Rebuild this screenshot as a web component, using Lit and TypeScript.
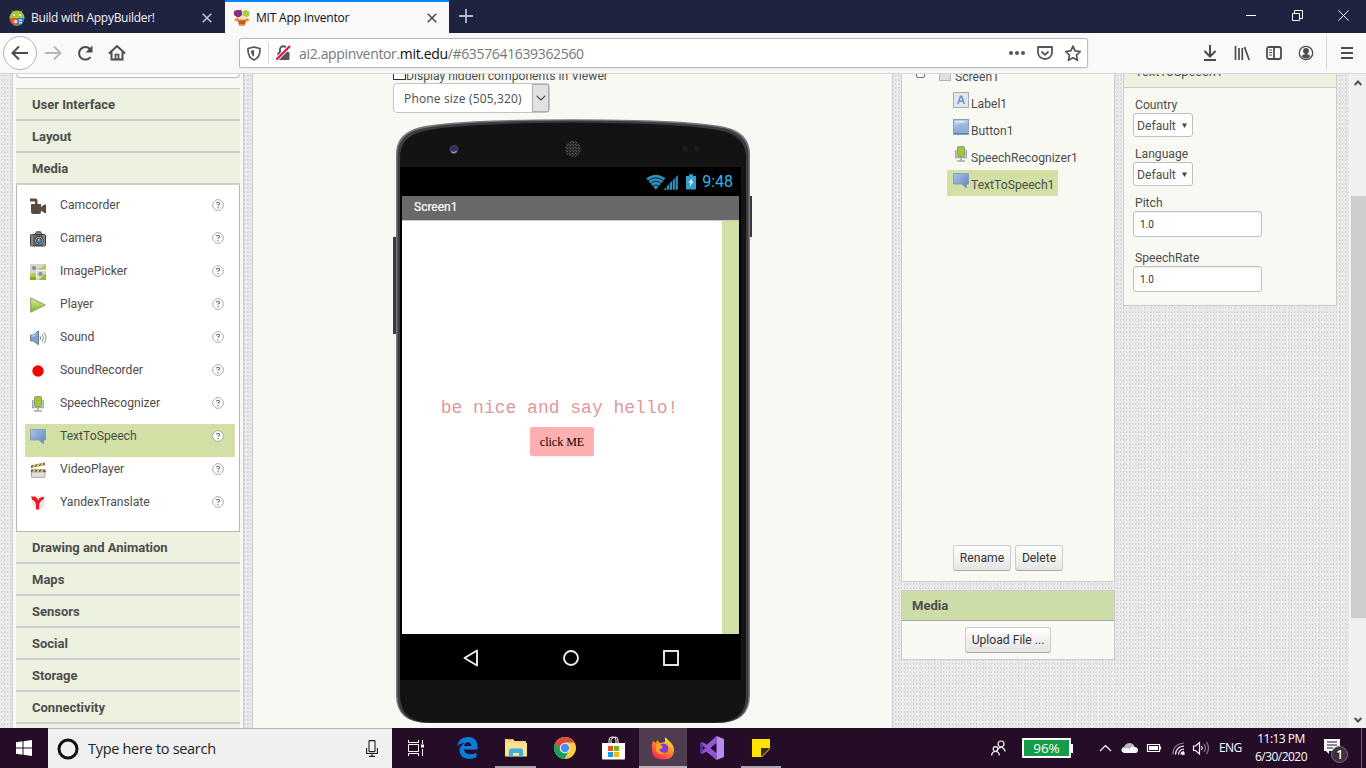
import { LitElement, html, css } from "lit";
import { customElement } from "lit/decorators.js";
import { classMap } from "lit/directives/class-map.js";

const mic = html`<svg width="16" height="16" viewBox="0 0 16 16"><path d="M2.800 4v7.500h10.400V4M8 12v2.500M4 15h8" fill="none" stroke="#a8a8a8" stroke-width="1.600"/><rect x="4.500" y=".6" width="7" height="10" rx="1.200" fill="#a0c63a" stroke="#8a9a70"/></svg>`;
const speech = html`<svg width="16" height="16" viewBox="0 0 16 16"><defs><linearGradient id="sp" x1="0" y1="0" x2="1" y2="1"><stop offset="0" stop-color="#a9c6ea"/><stop offset="1" stop-color="#5c82bb"/></linearGradient></defs><path d="M.5 .5h15v10.500h-2v4l-4.500-4H.5z" fill="url(#sp)" stroke="#7e96b8" stroke-width=".8"/></svg>`;
const sparkle = {
  camcorder: html`<svg width="17" height="16" viewBox="0 0 17 16"><path d="M0 .5h5.500q2 0 2 2V6h3.500v3l3.500-2.500H16v8.500h-1.500L11 12.500V14q0 2-2 2H3q-2 0-2-2V6h4V3.500H0z" fill="#5c4a3f"/></svg>`,
  camera: html`<svg width="16" height="16" viewBox="0 0 16 16"><path d="M5 3.500L6.500.8h4L12 3.500" fill="#888" stroke="#444"/><rect x=".5" y="3.500" width="15" height="11.500" rx="1" fill="#666" stroke="#3d3d3d"/><path d="M2 4v11M14 4v11" stroke="#aaa"/><circle cx="9" cy="9.700" r="4.300" fill="#c8c8c8" stroke="#333"/><circle cx="9" cy="9.700" r="2.600" fill="#4c8fd0" stroke="#234"/><path d="M8 9l1.500-1" stroke="#dff"/></svg>`,
  picker: html`<svg width="16" height="16" viewBox="0 0 16 16"><rect width="16" height="16" fill="#d3d6d4"/><path d="M0 10l6-1v6H0zM8 6l8-6v5z" fill="#a9cf45"/><path d="M9 16l7-7v7z" fill="#8fbb2c"/><path d="M0 13h6v3H0z" fill="#7fab1c"/><path d="M6.500 6.500H16M6.500 6.500V16" stroke="#f4f4f4"/><circle cx="4" cy="4" r="2.100" fill="#8d8d8d"/><circle cx="10.500" cy="10" r="2.100" fill="#8d8d8d"/></svg>`,
  player: html`<svg width="16" height="16" viewBox="0 0 16 16"><defs><linearGradient id="pl" x1="0" y1="0" x2="0" y2="1"><stop offset="0" stop-color="#d7eea0"/><stop offset="1" stop-color="#86b71c"/></linearGradient></defs><path d="M.7 1L15.300 8 .7 15.200z" fill="url(#pl)" stroke="#8a9c68" stroke-width="1"/></svg>`,
  sound: html`<svg width="17" height="16" viewBox="0 0 17 16"><path d="M.6 5h3L8.500.8v14L3.600 11h-3z" fill="#7fa3d3" stroke="#64789a"/><path d="M1.500 6h2.500l3-2.500" fill="none" stroke="#c5daf2"/><path d="M10 6q1.500 2 0 4M12 4q3 4 0 8M14 2.500q4 5.500 0 11" fill="none" stroke="#8c8c8c"/></svg>`,
  rec: html`<svg width="16" height="16" viewBox="0 0 16 16"><circle cx="8" cy="8" r="5.700" fill="#f80000"/></svg>`,
  mic,
  speech,
  video: html`<svg width="16" height="16" viewBox="0 0 16 16"><path d="M1 3.500l14-3v2.500L1 6z" fill="#6d5c3c"/><path d="M3 5.500l2-2.500M7 4.500l2-2.500M11 3.700l2-2.500" stroke="#e5c982" stroke-width="1.800"/><path d="M1.500 8h13.500v7.300H1.500z" fill="#e0e0e0" stroke="#aaa"/><path d="M1 7.500h14.500v2.700H1z" fill="#6d5c3c"/><path d="M3 10.200l2-2.700M7 10.200l2-2.700M11 10.200l2-2.700" stroke="#e5c982" stroke-width="1.800"/></svg>`,
  yandex: html`<svg width="16" height="16" viewBox="0 0 16 16"><circle cx="8.500" cy="8" r="6.500" fill="#e8e8e8"/><path d="M1 1.500h3.500Q7 2 8 5.500 9 2.500 13.500 1.500L14 4Q9.500 6 9.200 10V14.500H6V10Q5 5 2 4.800z" fill="#f4161b"/></svg>`,
};
const help = html`<svg class="help" width="12" height="12" viewBox="0 0 12 12"><path d="M4 .8h4L11.200 4v4L8 11.200H4L.8 8V4z" fill="#fff" stroke="#a4a4a4" stroke-width=".9" stroke-linejoin="round"/><path d="M4.300 4.500Q4.500 3.200 6 3.200q1.600 0 1.600 1.200 0 .8-.9 1.200-.7.400-.7 1.200M6 8v1.300" fill="none" stroke="#6a6a6a" stroke-width="1.100"/></svg>`;

const items: [keyof typeof sparkle, string][] = [
  ["camcorder", "Camcorder"], ["camera", "Camera"], ["picker", "ImagePicker"], ["player", "Player"],
  ["sound", "Sound"], ["rec", "SoundRecorder"], ["mic", "SpeechRecognizer"], ["speech", "TextToSpeech"],
  ["video", "VideoPlayer"], ["yandex", "YandexTranslate"],
];

@customElement("browser-chrome")
class BrowserChrome extends LitElement {
  static styles = css`
    :host { display: block; font: 12px/16px "Open Sans", "Noto Sans", sans-serif; }
    .tabs { height: 33px; background: #202340; display: flex; }
    .tab { box-sizing: border-box; height: 33px; display: flex; align-items: center; padding: 2px 13px 0 9px; color: #f2f2f7; white-space: nowrap; }
    .one { width: 225px; }
    .two { width: 224px; background: #f9f9fa; color: #0c0c0d; border-top: 2px solid #0a84ff; padding-top: 0; padding-right: 12px; }
    .label { margin-left: 6px; flex: 1; letter-spacing: -.29px; }
    .two .label { letter-spacing: -.2px; }
    .plus { margin: 9px 0 0 10px; }
    .wc { margin-left: auto; margin-right: 17px; margin-top: 10px; display: flex; gap: 35px; }
    .bar { height: 41px; background: #f9f9fa; border-bottom: 1px solid #d7d7db; box-sizing: border-box; display: flex; align-items: center; }
    .url { box-sizing: border-box; width: 849px; height: 30px; margin-left: 112px; border: 1px solid #b9b9bb; border-radius: 2px; background: #fff; display: flex; align-items: center; padding: 0 6px 0 7px; box-shadow: 0 1px 3px #0001; }
    .sep { width: 1px; height: 22px; background: #d7d7db; margin: 0 7px; }
    .addr { font-size: 14px; line-height: 20px; letter-spacing: -.34px; color: #77777b; margin-left: 8px; padding-top: 1px; flex: 1; white-space: nowrap; }
    .addr b { font-weight: 400; color: #0c0c0d; }
    .right { margin-left: 114px; display: flex; align-items: center; gap: 16px; }
    .vsep { width: 1px; height: 34px; background: #d7d7db; margin: 0 -2px 0 -4px; }
  `;
  render() {
    return html`
      <div class="tabs">
        <div class="tab one">
          <svg width="16" height="16" viewBox="0 0 16 16"><circle cx="8" cy="8.500" r="7.500" fill="#2d86c8"/><path d="M.5 8a7.500 7.500 0 0 1 15 0z" fill="#a4c639"/><path d="M.5 8h8v8Q2 15.500.5 8z" fill="#e8572a"/><path d="M3 .5l2 2.500M13 .5l-2 2.500" stroke="#a4c639"/><circle cx="5" cy="5" r=".9" fill="#fff"/><circle cx="11" cy="5" r=".9" fill="#fff"/><circle cx="6.500" cy="11.500" r="1.800" fill="#f7d8c8"/><path d="M10 9.500h3v1.500h-3zM10 12h3v1.500h-3z" fill="#cbe4f5"/></svg>
          <span class="label">Build with AppyBuilder!</span>
          <svg width="10" height="10" viewBox="0 0 10 10"><path d="M.7.7l8.600 8.600M9.300.7L.7 9.300" stroke="#c5c5cf" stroke-width="1.500"/></svg>
        </div>
        <div class="tab two">
          <svg width="16" height="16" viewBox="0 0 16 16"><rect width="16" height="16" fill="#fff"/><path d="M0 1l3-1h4l1 1.500v4L6 7 3.500 7.500 0 5z" fill="#8d2c84"/><path d="M8.500 1l4-1 3 1.500v4l-3 2-4-2z" fill="#a5cf4c"/><path d="M5 8l3-3 3 3-1 2H6z" fill="#f7dcc8"/><path d="M0 9.500L3.500 7.500 5 9.500h6L12.500 8l3.500 1.500-2.500 2h-11z" fill="#f58b2d"/><path d="M4 10.500h8l-1 5H5z" fill="#b4622c"/><path d="M5 14h6v1.500H5z" fill="#f58b2d"/></svg>
          <span class="label">MIT App Inventor</span>
          <svg width="10" height="10" viewBox="0 0 10 10"><path d="M.7.7l8.600 8.600M9.300.7L.7 9.300" stroke="#4a4a4f" stroke-width="1.500"/></svg>
        </div>
        <svg class="plus" width="14" height="14" viewBox="0 0 14 14"><path d="M7 0v14M0 7h14" stroke="#b9bac6" stroke-width="1.800"/></svg>
        <div class="wc">
          <svg width="11" height="11" viewBox="0 0 11 11"><path d="M0 5.500h10" stroke="#fff"/></svg>
          <svg width="11" height="11" viewBox="0 0 11 11"><path d="M.5 3.500h7v7h-7zM2.500 3V.5h8v8H8" fill="none" stroke="#fff"/></svg>
          <svg width="11" height="11" viewBox="0 0 11 11"><path d="M.5.5l10 10M10.500.5l-10 10" stroke="#fff"/></svg>
        </div>
      </div>
      <div class="bar">
        <svg width="127" height="40" viewBox="0 0 127 40" fill="none" stroke="#4a4a4f" stroke-width="2">
          <circle cx="20" cy="20" r="16.500" fill="#fff" stroke="#b5b5b8" stroke-width="1"/>
          <path d="M28 20H13M19 13.500L12.500 20l6.500 6.500"/>
          <path d="M45 20h15M54 13.500l6.500 6.500-6.500 6.500" stroke="#b8b8ba"/>
          <path d="M90.500 24a6.300 6.300 0 1 1-.5-8"/><path d="M92.500 12.500v7h-7z" fill="#4a4a4f" stroke="none"/>
          <path d="M109 20.500l8-7.500 8 7.500M111.500 19v7.500h11V19"/><path d="M115.500 27v-5.500h3V27" stroke-width="1.700"/>
        </svg>
        <div class="url">
          <svg width="14" height="15" viewBox="0 0 14 15"><path d="M7 1L13 2.500Q13.500 11 7 14 .5 11 1 2.500z" fill="none" stroke="#55555a" stroke-width="1.700" stroke-linejoin="round"/><path d="M7 4v6.800Q4 9 4 4.700z" fill="#55555a"/></svg>
          <div class="sep"></div>
          <svg width="15" height="16" viewBox="0 0 15 16"><path d="M4 7V4.500a3.300 3.300 0 0 1 6.600 0V7" fill="none" stroke="#55555a" stroke-width="1.900"/><rect x="1.500" y="7" width="12" height="8" rx="1" fill="#55555a"/><path d="M.5 14.500L14 1" stroke="#f9f9fa" stroke-width="4"/><path d="M.5 14.500L14 1" stroke="#ff0039" stroke-width="2"/></svg>
          <span class="addr">ai2.appinventor.<b>mit.edu</b>/#6357641639362560</span>
          <svg width="76" height="18" viewBox="0 0 76 18" fill="none" stroke="#55555a" stroke-width="1.800"><g fill="#55555a" stroke="none"><circle cx="6" cy="9" r="2"/><circle cx="12" cy="9" r="2"/><circle cx="18" cy="9" r="2"/></g><path d="M33 3h14v5.500a7 6.500 0 0 1-14 0zM36.500 7.500l3.500 3.300 3.500-3.300" stroke-linejoin="round"/><path d="M68 2l2.100 4.800 5.200.7-3.800 3.600 1 5.200-4.500-2.500-4.600 2.500 1-5.200-3.800-3.600 5.200-.7z" stroke-linejoin="round" stroke-width="1.700"/></svg>
        </div>
        <div class="right">
          <svg width="16" height="16" viewBox="0 0 16 16" fill="none" stroke="#4a4a4f" stroke-width="2"><path d="M8 0v11M2.500 6L8 11.500 13.500 6M2 15h12"/></svg>
          <svg width="16" height="16" viewBox="0 0 16 16" fill="none" stroke="#4a4a4f" stroke-width="1.700"><path d="M1.500 1v14M5 3v12M8.300 3v12M10.500 2l4.700 13"/></svg>
          <svg width="16" height="16" viewBox="0 0 16 16" fill="none" stroke="#4a4a4f" stroke-width="1.800"><rect x="1" y="2" width="14" height="12" rx="2"/><path d="M8 2v12"/><path d="M3 5h3M3 7.500h3M3 10h3" stroke-width="1"/></svg>
          <svg width="16" height="16" viewBox="0 0 16 16"><circle cx="8" cy="8" r="6.700" fill="none" stroke="#4a4a4f" stroke-width="1.300"/><circle cx="8" cy="6" r="2.900" fill="#4a4a4f"/><path d="M3.500 11q4.500-4 9 0-4.500 5-9 0z" fill="#4a4a4f"/></svg>
          <div class="vsep"></div>
          <svg width="12" height="14" viewBox="0 0 12 14"><path d="M0 2h12M0 7h12M0 12h12" stroke="#4a4a4f" stroke-width="2"/></svg>
        </div>
      </div>`;
  }
}

@customElement("palette-panel")
class PalettePanel extends LitElement {
  static styles = css`
    :host { box-sizing: border-box; display: block; width: 232px; height: 654px; overflow: hidden; border: 1px solid #ccc; border-width: 0 1px; background: #f8f9f3; padding: 0 3px 0 3px; font: 12px/16px Roboto, sans-serif; color: #4d4d4d; }
    .find { box-sizing: border-box; height: 4px; border: 1px solid #bbb; border-top: 0; border-radius: 0 0 4px 4px; background: #fff; }
    .cats { margin-top: 10px; border-top: 1px solid #ccc; width: 224px; }
    .cat { box-sizing: border-box; height: 32px; background: #edf1e0; border-bottom: 2px solid #cecece; padding: 8px 16px 0; font-weight: 700; font-size: 13px; }
    .list { box-sizing: border-box; height: 347px; border: 1px solid #b6b6b6; border-top: 0; background: #fff; padding: 8px 4px 8px 8px; }
    .item { height: 33px; display: flex; align-items: flex-start; padding-left: 5px; padding-right: 11px; box-sizing: border-box; }
    .sel { background: #d2e0a6; }
    .ico { width: 30px; padding-top: 5px; }
    .ico svg, .help { display: block; }
    .name { flex: 1; padding-top: 4px; font-size: 12.150px; }
    .help { margin-top: 6px; }
  `;
  render() {
    const cat = (t: string) => html`<div class="cat">${t}</div>`;
    return html`<div class="find"></div>
      <div class="cats">
        ${["User Interface", "Layout", "Media"].map(cat)}
        <div class="list">${items.map(([k, n]) => html`<div class=${classMap({ item: true, sel: k === "speech" })}><span class="ico">${sparkle[k]}</span><span class="name">${n}</span>${help}</div>`)}</div>
        ${["Drawing and Animation", "Maps", "Sensors", "Social", "Storage", "Connectivity", ""].map(cat)}
      </div>`;
  }
}

@customElement("phone-viewer")
class PhoneViewer extends LitElement {
  static styles = css`
    :host { box-sizing: border-box; display: block; width: 641px; height: 654px; overflow: hidden; border: 1px solid #ccc; border-width: 0 1px; background: #f8f9f3; padding-left: 140px; font: 12.150px/16px Roboto, sans-serif; color: #4d4d4d; }
    .hidden { display: flex; height: 9px; align-items: flex-end; white-space: nowrap; }
    .hidden i { box-sizing: border-box; width: 13px; height: 13px; border: 1px solid #333; background: #fff; margin-bottom: 3px; }
    .hidden span { margin-bottom: -1px; }
    .select { box-sizing: border-box; width: 157px; height: 30px; border: 1px solid #c4c4c4; border-radius: 4px; background: #fff; display: flex; justify-content: space-between; padding-left: 10px; font: 12px/29px "Open Sans", sans-serif; letter-spacing: .16px; }
    .arrow { width: 17px; background: #e1e1e1; border: 1px solid #adadad; box-sizing: border-box; display: grid; place-items: center; }
    .phone { display: grid; width: 360px; height: 610px; margin-top: 5px; }
    .phone > * { grid-area: 1 / 1; }
    .frame { display: block; }
    .screen { width: 341px; height: 513px; margin: 49px 0 0 7px; background: #000; }
    .status { height: 29px; display: flex; justify-content: flex-end; align-items: center; padding-right: 8px; box-sizing: border-box; color: #33b5e5; font: 16px/29px Roboto, sans-serif; gap: 6px; }
    .title { box-sizing: border-box; width: 337px; margin-left: 2px; height: 25px; background: #696969; border-bottom: 1px solid #c8c8c8; color: #fff; padding: 3px 12px; font-size: 12px; -webkit-text-stroke: .2px #fff; }
    .body { width: 337px; margin-left: 2px; height: 413px; display: flex; background: #d2e0a6; }
    .form { width: 320px; background: #fff; display: flex; flex-direction: column; align-items: center; }
    .label { margin: 176px 0 0 -5px; font: 18px/22px "Liberation Mono", monospace; color: #e0999a; white-space: pre; }
    .btn { margin: 8px 0 0 0; width: 64px; height: 29px; background: #ffafaf; border-radius: 2px; font: 12px/30px "Liberation Serif", serif; color: #000; text-align: center; box-shadow: 0 1px 2px #0001; }
    .nav { height: 46px; display: block; }
  `;
  render() {
    return html`
      <div class="hidden"><i></i><span>Display hidden components in Viewer</span></div>
      <div class="select"><span>Phone size (505,320)</span><span class="arrow"><svg width="10" height="6" viewBox="0 0 10 6"><path d="M.8.8L5 5 9.200.8" fill="none" stroke="#444" stroke-width="1.200"/></svg></span></div>
      <div class="phone">
        <svg class="frame" width="360" height="610" viewBox="0 0 360 610">
          <defs><pattern id="g" width="3" height="3" patternUnits="userSpaceOnUse"><path d="M0 0h1v1H0zM2 2h1v1H2z" fill="#5a5a5a"/></pattern></defs>
          <path d="M0 119h4v97H0zM356 78h3v41h-3z" fill="#3a3a3c"/>
          <path d="M3 36Q3 18 21 11Q45 1.500 180 1.200Q315 1.500 339 11Q357 18 357 36V577Q357 605 325 605H35Q3 605 3 577z" fill="#77777a"/>
          <path d="M4.500 37Q4.500 19.500 22 12.500Q46 3 180 2.500Q314 3 338 12.500Q355.500 19.500 355.500 37V577Q355.500 605 324 605H36Q4.500 605 4.500 577z" fill="#3c3c40"/>
          <path d="M7 40Q7 22 24 15Q48 5.500 180 4.500Q312 5.500 336 15Q353 22 353 40V577Q353 604.500 322 604.500H38Q7 604.500 7 577z" fill="#131313"/>
          <circle cx="61" cy="31.500" r="4.500" fill="#3f3f46"/><circle cx="61" cy="31" r="2.500" fill="#2a2a78"/><path d="M58.500 33.500q2.500 2.500 5-.5" fill="none" stroke="#999" stroke-width="1.300"/>
          <circle cx="180" cy="31" r="8" fill="#262626"/><circle cx="180" cy="31" r="8" fill="url(#g)"/>
          <circle cx="292" cy="30.500" r="3" fill="#1d1d1f"/><circle cx="304" cy="30.500" r="2.200" fill="#1d1d1f"/>
        </svg>
        <div class="screen">
          <div class="status">
            <svg width="50" height="16" viewBox="0 0 50 16"><path d="M.3 4.500Q9.800-3 19.300 4.500L9.800 15.800z" fill="#2b93bd"/><path d="M2 6.800q7.800-6 15.600 0M4.300 9.500q5.500-4.500 11 0M6.600 12.200q3.200-2.500 6.400 0" fill="none" stroke="#000" stroke-width=".8"/><path d="M17.500 15.700L31.800 1V15.700z" fill="#2b93bd"/><path d="M20.500 10v6M23.500 7v9M26.500 5v11M29.300 2v14" stroke="#000" stroke-width=".7"/><path d="M40 2h3V.3h4V2h3v13.500H40z" fill="#2fa0cb"/><path d="M46.500 4l-4 4.500h2.300l-1.300 4.500 4-5.500h-2.300z" fill="#fff"/></svg>
            <span>9:48</span>
          </div>
          <div class="title">Screen1</div>
          <div class="body"><div class="form"><div class="label">be nice and say hello!</div><div class="btn">click ME</div></div></div>
          <svg class="nav" width="341" height="46" viewBox="0 0 341 46" fill="none" stroke="#eee" stroke-width="1.900"><path d="M77 16.500v15L64.500 24z" stroke-linejoin="round"/><circle cx="171" cy="24" r="7"/><rect x="264" y="17" width="14" height="14"/></svg>
        </div>
      </div>`;
  }
}

@customElement("side-panels")
class SidePanels extends LitElement {
  static styles = css`
    :host { display: flex; align-items: flex-start; gap: 8px; height: 654px; overflow: hidden; font: 12.150px/16px Roboto, sans-serif; color: #4d4d4d; }
    .panel { box-sizing: border-box; width: 214px; border: 1px solid #ccc; background: #f8f9f3; }
    .tree { height: 508px; border-top: 0; display: flex; flex-direction: column; }
    .root { height: 20px; margin-top: -5px; display: flex; padding-left: 14px; flex: none; }
    .root .box { box-sizing: border-box; width: 9px; height: 9px; border: 1.500px solid #5870b0; background: #fff; border-radius: 2px; margin-right: 14px; }
    .root .chip { box-sizing: border-box; width: 12px; height: 12px; border: 1px solid #b5b5b5; background: #dedede; margin-right: 4px; }
    .root span { margin-top: 0; }
    .node { display: flex; height: 26px; margin: 0 0 1px 45px; align-self: flex-start; padding: 0 4px 0 6px; box-sizing: border-box; }
    .node svg { margin: 3px 2px 0 0; }
    .node span { padding-top: 7px; }
    .on { background: #d2e0a6; }
    .actions { margin-top: auto; margin-bottom: 10px; display: flex; justify-content: center; gap: 4px; }
    .button { box-sizing: border-box; height: 26px; border: 1px solid #ccc; border-bottom-color: #aaa; border-radius: 3px; background: linear-gradient(#fff, #e4e4e4); color: #333; line-height: 24px; text-align: center; }
    .rename { width: 58px; } .delete { width: 48px; } .upload { width: 86px; margin: 6px auto 0; }
    .media { margin-top: 8px; height: 70px; }
    .head { box-sizing: border-box; height: 30px; background: #ccdda8; border-bottom: 1px solid #aaa; padding: 7px 10px; font-weight: 700; font-size: 13px; }
    .props { height: 232px; border-top: 0; }
    .phead { box-sizing: border-box; height: 14px; overflow: hidden; background: #edf1e0; border-bottom: 1px solid #ccc; }
    .phead div { margin: -10px 0 0 11px; font-size: 12.800px; }
    .form { padding: 9px 9px 0; }
    .lab { padding-left: 2px; height: 16px; }
    .sel, .inp { box-sizing: border-box; border: 1px solid #c0c0c0; border-radius: 3px; background: #fff; }
    .sel { width: 60px; height: 24px; margin: 0 0 9px; display: flex; align-items: center; justify-content: space-between; padding: 1px 5px 0 3px; }
    .sel svg { flex: none; }
    .inp { width: 129px; height: 26px; margin: 0 0 13px; padding-left: 6px; font-size: 10px; line-height: 26px; box-shadow: inset 0 1px 1px #0001; color: #333; }
  `;
  render() {
    const a = html`<svg width="16" height="16" viewBox="0 0 16 16"><rect x=".5" y=".5" width="15" height="15" fill="#e2e6ec" stroke="#aaa"/><path d="M4.800 12L7.500 4.200h1.200L11.300 12M5.800 9.300h4.500" fill="none" stroke="#6f96cf" stroke-width="1.600"/></svg>`;
    const b = html`<svg width="16" height="16" viewBox="0 0 16 16"><defs><linearGradient id="bt" x1="0" y1="0" x2="0" y2="1"><stop offset="0" stop-color="#a6c0e4"/><stop offset="1" stop-color="#86aad9"/></linearGradient></defs><rect x=".5" y=".5" width="15" height="15" fill="url(#bt)" stroke="#8c9fba"/><path d="M1 10Q3 4 14.500 4V1H1z" fill="#fff" opacity=".2"/><path d="M2 2h9v1.500H2z" fill="#fff" opacity=".6"/><path d="M1 14.500h14" stroke="#5c80b5"/></svg>`;
    const tri = html`<svg width="5" height="5" viewBox="0 0 5 5"><path d="M0 .5h5L2.500 5z" fill="#444"/></svg>`;
    return html`
      <div>
        <div class="panel tree">
          <div class="root"><div class="box"></div><div class="chip"></div><span>Screen1</span></div>
          ${([[a, "Label1"], [b, "Button1"], [mic, "SpeechRecognizer1"], [speech, "TextToSpeech1"]] as const).map(([i, t], n) => html`<div class=${classMap({ node: true, on: n === 3 })}>${i}<span>${t}</span></div>`)}
          <div class="actions"><div class="button rename">Rename</div><div class="button delete">Delete</div></div>
        </div>
        <div class="panel media"><div class="head">Media</div><div class="button upload">Upload File ...</div></div>
      </div>
      <div class="panel props">
        <div class="phead"><div>TextToSpeech1</div></div>
        <div class="form">
          <div class="lab">Country</div><div class="sel">Default${tri}</div>
          <div class="lab">Language</div><div class="sel">Default${tri}</div>
          <div class="lab">Pitch</div><div class="inp">1.0</div>
          <div class="lab">SpeechRate</div><div class="inp">1.0</div>
        </div>
      </div>`;
  }
}

@customElement("task-bar")
class TaskBar extends LitElement {
  static styles = css`
    :host { display: flex; height: 40px; background: #250c27; color: #fff; font: 12px/18px "Open Sans", "Noto Sans", sans-serif; }
    .start { width: 48px; display: grid; place-items: center; }
    .search { box-sizing: border-box; width: 344px; background: #f0f0f0; border-top: 1px solid #b9b5ba; display: flex; align-items: center; padding: 0 14px 0 9px; color: #222; }
    .search span { flex: 1; margin-left: 9px; font-size: 14.500px; letter-spacing: -.3px; }
    .apps { display: flex; }
    .app { box-sizing: border-box; width: 49px; height: 40px; display: grid; place-items: center; border-bottom: 2px solid transparent; padding-top: 2px; }
    .task { width: 48px; } .edge { width: 55px; padding-right: 1px; } .files { width: 41px; border-color: #aaa6ac; margin-right: 4px; }
    .fox { width: 48px; background: #503c51; border-color: #bbb5bb; margin-left: 1px; }
    .vs { width: 50px; } .note { width: 40px; margin-left: 4px; border-color: #aaa6ac; }
    .tray { margin-left: auto; display: flex; align-items: center; }
    .charge { box-sizing: border-box; width: 49px; height: 20px; border: 2px solid #fff; background: #169b4b; text-align: center; font-size: 13.500px; line-height: 17px; letter-spacing: -.1px; margin-left: 16px; }
    .nub { width: 2px; height: 9px; background: #fff; }
    .icons { margin-left: 25px; }
    .eng { margin-left: 9px; letter-spacing: -.6px; width: 24px; }
    .clock { width: 66px; margin-left: 5px; text-align: center; letter-spacing: -.53px; white-space: nowrap; }
    .notif { margin-left: 9px; margin-top: 3px; }
    .edgeLine { width: 1px; height: 40px; background: #6f5f70; margin: 0 4px 0 12px; }
  `;
  render() {
    return html`
      <div class="start"><svg width="16" height="16" viewBox="0 0 16 16"><path d="M0 2.200L6.500 1.300V7.500H0zM7.500 1.200L16 0v7.500H7.500zM0 8.500h6.500v6.200L0 13.800zM7.500 8.500H16V16l-8.500-1.200z" fill="#fff"/></svg></div>
      <div class="search">
        <svg width="22" height="22" viewBox="0 0 22 22"><circle cx="11" cy="11" r="9" fill="none" stroke="#111" stroke-width="3"/></svg>
        <span>Type here to search</span>
        <svg width="12" height="17" viewBox="0 0 12 17" fill="none" stroke="#222" stroke-width="1.100"><rect x="3" y=".6" width="6" height="11" rx=".5"/><path d="M.6 8v5.500h10.800V8M6 14v2.500M3 16.400h6"/></svg>
      </div>
      <div class="apps">
        <div class="app task"><svg width="16" height="16" viewBox="0 0 16 16" fill="none" stroke="#fff"><path d="M.5 0v2.500h10V0M.5 16v-2.500h10V16M.5 4.500h10v7H.500zM14.500 0v4M14.500 9v7"/><path d="M13 4.500h3v3h-3z" fill="#fff" stroke="none"/></svg></div>
        <div class="app edge"><svg width="21" height="22" viewBox="0 0 21 22"><path d="M0 9Q2 0 11 0q9 0 9.500 9v3.500H7q.5 4.500 6 4.700 4 0 6.500-1.500V20Q17 22 12 22 3 21.500 2.500 13.500 2.500 9 8 6 3 6 0 9zM7 9h7.500Q14 5.500 11 5.200 8 5.500 7 9z" fill="#0a7bda"/></svg></div>
        <div class="app files"><svg width="22" height="18" viewBox="0 0 22 18"><path d="M0 0h8l1.500 2H21v15H0z" fill="#f7d678"/><path d="M0 4h22v13.500H0z" fill="#fde290"/><path d="M3 .7h4" stroke="#e89d26"/><path d="M4 18v-7l1.500-1.500h11L18 11v7h-4v-4H8v4z" fill="#38b0e4"/></svg></div>
        <div class="app"><svg width="22" height="22" viewBox="0 0 22 22"><circle cx="11" cy="11" r="11" fill="#ffcd43"/><path d="M1.500 5.500A11 11 0 0 1 20.500 5.500H11L6 14z" fill="#dc4c3e"/><path d="M1.500 5.500l5 8.500 8 .5L10.500 22A11 11 0 0 1 1.500 5.500z" fill="#17a05d"/><circle cx="11" cy="11" r="5.200" fill="#f1f1f1"/><circle cx="11" cy="11" r="4.200" fill="#4c8bf5"/></svg></div>
        <div class="app"><svg width="23" height="24" viewBox="0 0 23 24"><path d="M7 7V4q0-3 3-3h1q3 0 3 3v3M9 7V4q0-2 4-3 3 0 3 3v3" fill="none" stroke="#fff"/><path d="M0 7h23v15.500q0 1-1 1H1q-1 0-1-1z" fill="#fff"/><path d="M6 10h5v5H6z" fill="#f25022"/><path d="M12 10h5v5h-5z" fill="#7fba00"/><path d="M6 16h5v5H6z" fill="#00a4ef"/><path d="M12 16h5v5h-5z" fill="#ffb900"/></svg></div>
        <div class="app fox"><svg width="24" height="24" viewBox="0 0 24 24"><defs><linearGradient id="ff" x1=".8" y1="0" x2=".2" y2="1"><stop offset="0" stop-color="#fff14a"/><stop offset=".4" stop-color="#ff9a1f"/><stop offset="1" stop-color="#f5195c"/></linearGradient></defs><path d="M2 5l3 2 1-3 3 3 5-1 0-5 4 4q5 4 5 9 0 9.500-11 9.500T1 14Q0 9 2 5z" fill="url(#ff)"/><circle cx="12.500" cy="12.500" r="4.800" fill="#7a3ddb"/><path d="M5 8q4-1 7 3-2 2.500-4 2.500 2 4 7 3-7 4-10-2z" fill="#ffa02a"/></svg></div>
        <div class="app vs"><svg width="24" height="24" viewBox="0 0 24 24"><path d="M16.500 0v7L5 16.500 2 18l-2-1V7l2-1 3 1.500L16.500 17v7L2.500 12.500z" fill="#8d55d3"/><path d="M2.500 9.500v5L5.500 12z" fill="#250c27"/><path d="M0 7l2-1 .5 2v8L2 18l-2-1z" fill="#5d2f99"/><path d="M16.500 0L24 3v18l-7.500 3z" fill="#b98af2"/></svg></div>
        <div class="app note"><svg width="18" height="18" viewBox="0 0 18 18"><path d="M0 0h18v18H0z" fill="#ffe400"/><path d="M9 18V9h9z" fill="#3a2b16"/><path d="M10 18l8-8v8z" fill="#250c27"/></svg></div>
      </div>
      <div class="tray">
        <svg width="15" height="16" viewBox="0 0 15 16" fill="none" stroke="#fff" stroke-width="1.200"><circle cx="10" cy="4" r="3"/><path d="M7 9q3-3.500 6 0 1 1 1 2.500"/><circle cx="4.500" cy="9" r="2.300"/><path d="M.7 15.500q0-4 3.800-4t3.800 4"/></svg>
        <div class="charge">96%</div><div class="nub"></div>
        <svg class="icons" width="112" height="18" viewBox="0 0 112 18" fill="none" stroke="#fff" stroke-width="1.200"><path d="M2 12l5.500-5.500L13 12"/><path d="M27 14q-3.500-.3-3.500-3t3-3q1.500-4 5.500-3.500 3.500 0 4.500 3.500 3.500 0 3.500 3.500 0 2.300-2.500 2.500z" fill="#fff" stroke="none"/><path d="M24 10q0-2 2.500-2.500Q28 4 32 4.300q3 .2 4.300 3.300-4 0-5 2.500-3-1.500-7.300-.1z" fill="#bdb4be" stroke="none"/><path d="M49.500 5.500h12v7h-12z"/><path d="M51 7h9v4h-9z" fill="#fff" stroke="none"/><path d="M62.500 7.500v3"/><path d="M75 15.500Q75 5 86 4" stroke="#8b7d8c"/><path d="M77.500 15.500Q78 7.500 86 7M80.500 15.500q.5-5 5.500-5.500M83 15.500q0-2.500 3-3"/><path d="M84 13h2.500v3H84z" fill="#fff" stroke="none"/><path d="M95.500 7h2l4-3.500v11.500l-4-3.500h-2z"/><path d="M103.500 7q1.500 2 0 4"/><path d="M106 5q3 4 0 8M108.500 3q4 6 0 12" stroke="#8b7d8c"/></svg>
        <span class="eng">ENG</span>
        <div class="clock">11:13 PM<br>6/30/2020</div>
        <svg class="notif" width="26" height="26" viewBox="0 0 26 26"><path d="M1 2h16v12H6v3l-3-3H1z" fill="#fff"/><path d="M4 5h10M4 8h10M4 11h6" stroke="#250c27"/><circle cx="16.500" cy="17.500" r="8" fill="#3b323d" stroke="#77707a"/><text x="13.300" y="21.800" font-family="Open Sans" font-size="12" font-weight="600" fill="#fff">1</text></svg>
        <div class="edgeLine"></div>
      </div>`;
  }
}

@customElement("app-root")
class AppRoot extends LitElement {
  static styles = css`
    :host { display: block; width: 1366px; height: 768px; overflow: hidden; }
    .page { height: 654px; display: flex; overflow: hidden; padding-left: 12px; box-sizing: border-box; background-color: #ececec;
      background-image: radial-gradient(#0000001a 0.6px, #0000 0.9px), radial-gradient(#00000014 0.6px, #0000 0.9px), radial-gradient(#ffffff80 0.6px, #0000 1px), repeating-linear-gradient(90deg, #0000 0 2px, #00000007 2px 3px);
      background-size: 3px 4px, 7px 3px, 5px 7px, auto; }
    phone-viewer { margin-left: 8px; }
    side-panels { margin-left: 8px; }
    .scroll { box-sizing: border-box; width: 17px; height: 654px; margin-left: auto; background: #f0f0f0; border-left: 1px solid #fff; display: flex; flex-direction: column; align-items: center; padding: 6px 0 5px; }
    .thumb { width: 15px; height: 422px; background: #cdcdcd; margin: 110px 0 auto; }
  `;
  render() {
    return html`
      <browser-chrome></browser-chrome>
      <div class="page">
        <palette-panel></palette-panel>
        <phone-viewer></phone-viewer>
        <side-panels></side-panels>
        <div class="scroll">
          <svg width="8" height="6" viewBox="0 0 8 6"><path d="M.7 5L4 1.500 7.300 5" fill="none" stroke="#505050" stroke-width="1.900"/></svg>
          <div class="thumb"></div>
          <svg width="8" height="6" viewBox="0 0 8 6"><path d="M.7 1L4 4.500 7.300 1" fill="none" stroke="#505050" stroke-width="1.900"/></svg>
        </div>
      </div>
      <task-bar></task-bar>`;
  }
}
